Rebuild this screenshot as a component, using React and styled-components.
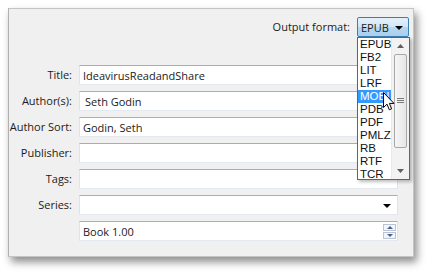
import React from 'react';
import styled, { createGlobalStyle } from 'styled-components';

const GlobalStyle = createGlobalStyle`
  html, body {
    margin: 0;
    background: #ffffff;
  }
  body {
    font-family: 'Open Sans', 'Liberation Sans', sans-serif;
    font-size: 11px;
    color: #1b1b1b;
  }
`;

const Stage = styled.div`
  padding: 8px 0 0 8px;
  width: 432px;
  height: 276px;
  box-sizing: border-box;
`;

const Window = styled.div`
  position: relative;
  width: 406px;
  height: 249px;
  box-sizing: border-box;
  background: #f0f0f0;
  border: 1px solid #c4c4c4;
  border-left-color: #b0b0b0;
  box-shadow: 3px 5px 8px rgba(0, 0, 0, 0.45);
  display: flex;
  flex-direction: column;
`;

const Header = styled.div`
  display: flex;
  justify-content: flex-end;
  align-items: center;
  gap: 7px;
  padding: 8px 4px 0 0;
`;

const Label = styled.label`
  text-align: right;
  white-space: nowrap;
  line-height: 20px;
`;

const ComboWrap = styled.div`
  position: relative;
`;

const FormatCombo = styled.div`
  width: 52px;
  height: 20px;
  box-sizing: border-box;
  border: 1px solid #3c7fb1;
  border-radius: 2px;
  background: linear-gradient(#e5f1fb 0%, #cfe6f8 50%, #b6d7f3 51%, #a9cfef 100%);
  display: flex;
  align-items: center;
  justify-content: space-between;
  padding: 0 5px 0 3px;
`;

const Arrow = styled.span`
  width: 0;
  height: 0;
  border-left: 4px solid transparent;
  border-right: 4px solid transparent;
  border-top: 4px solid #000;
  margin-top: 1px;
`;

const List = styled.div`
  position: absolute;
  top: 100%;
  left: 0;
  width: 53px;
  height: 143px;
  box-sizing: border-box;
  border: 1px solid #646464;
  background: #fff;
  display: flex;
  box-shadow: 2px 2px 3px rgba(0, 0, 0, 0.25);
  z-index: 5;
`;

const Items = styled.div`
  flex: 1;
  display: flex;
  flex-direction: column;
`;

const Item = styled.div`
  height: 13px;
  line-height: 13px;
  padding-left: 2px;
  font-family: 'Liberation Sans', Arial, sans-serif;
  font-size: 11.5px;
  background: ${(p) => (p.active ? '#3399ff' : 'transparent')};
  color: ${(p) => (p.active ? '#ffffff' : '#111')};
`;

const Scroll = styled.div`
  width: 17px;
  background: #f2f2f2;
  border-left: 1px solid #e8e8e8;
  display: flex;
  flex-direction: column;
  align-items: center;
`;

const ScrollBtn = styled.div`
  width: 17px;
  height: 16px;
  display: flex;
  align-items: center;
  justify-content: center;
`;

const Thumb = styled.div`
  width: 13px;
  height: 94px;
  box-sizing: border-box;
  border: 1px solid #a8a8a8;
  border-radius: 2px;
  background: linear-gradient(90deg, #f6f6f6, #e6e6e6);
  display: flex;
  align-items: center;
  justify-content: center;
`;

const Track = styled.div`
  flex: 1;
`;

const Cursor = styled.svg`
  position: absolute;
  left: 25px;
  top: 54px;
  z-index: 6;
`;

const Form = styled.div`
  display: grid;
  grid-template-columns: 63px 1fr;
  grid-auto-rows: 20px;
  column-gap: 7px;
  row-gap: 6px;
  margin-top: 28px;
  padding-right: 15px;
`;

const Field = styled.div`
  height: 20px;
  box-sizing: border-box;
  background: #ffffff;
  border: 1px solid #e2e3ea;
  border-top-color: #abadb3;
  border-bottom-color: #e3e9ef;
  display: flex;
  align-items: center;
  justify-content: space-between;
  padding: 0 6px 0 ${(p) => p.pad || 3}px;
  grid-column: 2;
`;

const Spin = styled.div`
  display: flex;
  flex-direction: column;
  gap: 1px;
  margin-right: -5px;
`;

const SpinBtn = styled.div`
  width: 13px;
  height: 7px;
  box-sizing: border-box;
  border: 1px solid #b9c4d8;
  background: #f2f5fa;
  display: flex;
  align-items: center;
  justify-content: center;
`;

const Tri = styled.span`
  width: 0;
  height: 0;
  border-left: 3px solid transparent;
  border-right: 3px solid transparent;
  ${(p) =>
    p.up ? 'border-bottom: 3px solid #4d6185;' : 'border-top: 3px solid #4d6185;'}
`;

const formats = ['EPUB', 'FB2', 'LIT', 'LRF', 'MOBI', 'PDB', 'PDF', 'PMLZ', 'RB', 'RTF', 'TCR'];

const App = () => (
  <Stage>
    <GlobalStyle />
    <Window>
      <Header>
        <Label>Output format:</Label>
        <ComboWrap>
          <FormatCombo>
            <span>EPUB</span>
            <Arrow />
          </FormatCombo>
          <List>
            <Items>
              {formats.map((f) => (
                <Item key={f} active={f === 'MOBI'}>
                  {f}
                </Item>
              ))}
            </Items>
            <Scroll>
              <ScrollBtn>
                <svg width="7" height="4" viewBox="0 0 7 4">
                  <path d="M0 4 L3.5 0 L7 4 Z" fill="#606060" />
                </svg>
              </ScrollBtn>
              <Thumb>
                <svg width="7" height="6" viewBox="0 0 7 6">
                  <path d="M0 0.5 H7 M0 2.5 H7 M0 4.5 H7" stroke="#7a7a7a" strokeWidth="1" />
                </svg>
              </Thumb>
              <Track />
              <ScrollBtn>
                <svg width="7" height="4" viewBox="0 0 7 4">
                  <path d="M0 0 L3.5 4 L7 0 Z" fill="#606060" />
                </svg>
              </ScrollBtn>
            </Scroll>
            <Cursor width="12" height="19" viewBox="0 0 12 19">
              <path
                d="M0.5 0.5 L0.5 15.5 L4 12.2 L6.3 17.8 L8.6 16.8 L6.4 11.4 L11 11.4 Z"
                fill="#ffffff"
                stroke="#000000"
                strokeWidth="1"
                strokeLinejoin="round"
              />
            </Cursor>
          </List>
        </ComboWrap>
      </Header>
      <Form>
        <Label>Title:</Label>
        <Field>IdeavirusReadandShare</Field>
        <Label>Author(s):</Label>
        <Field pad={5}>Seth Godin</Field>
        <Label>Author Sort:</Label>
        <Field>Godin, Seth</Field>
        <Label>Publisher:</Label>
        <Field />
        <Label>Tags:</Label>
        <Field />
        <Label>Series:</Label>
        <Field>
          <span />
          <Arrow />
        </Field>
        <Field>
          <span>Book 1.00</span>
          <Spin>
            <SpinBtn>
              <Tri up />
            </SpinBtn>
            <SpinBtn>
              <Tri />
            </SpinBtn>
          </Spin>
        </Field>
      </Form>
    </Window>
  </Stage>
);

export default App;
